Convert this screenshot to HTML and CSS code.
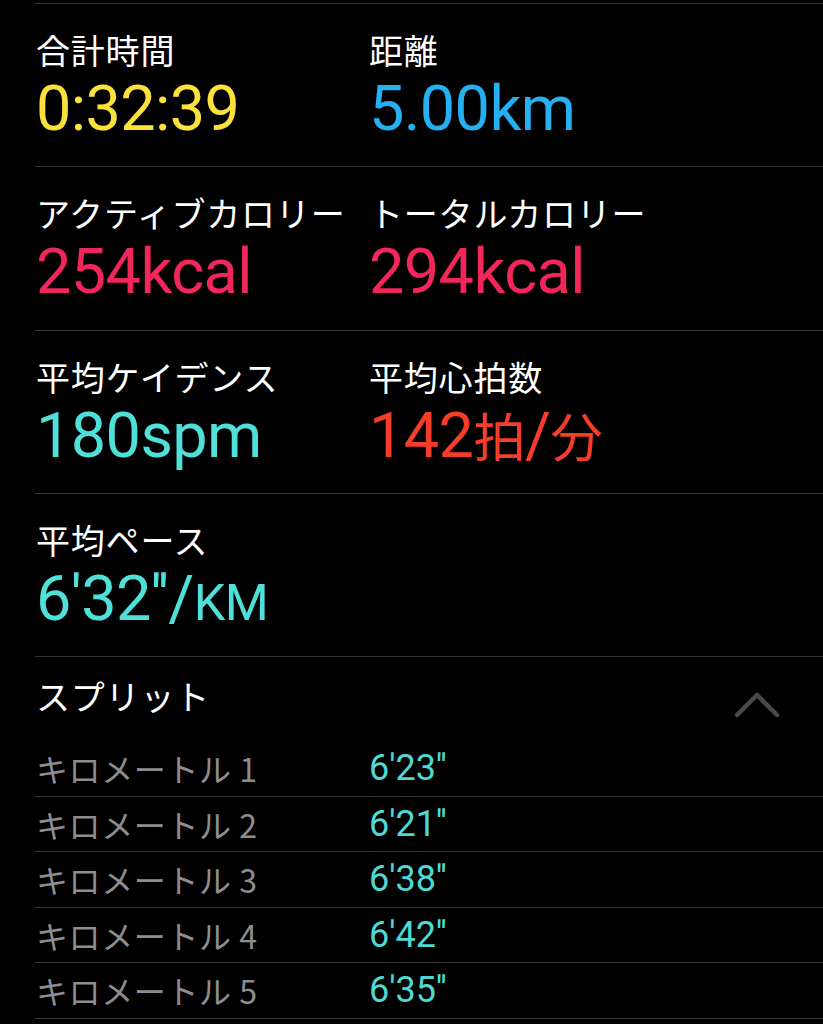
FILE: index.html
```html
<!DOCTYPE html>
<html lang="ja">
<head>
  <meta charset="UTF-8" />
  <title>ワークアウト</title>
  <link rel="stylesheet" href="styles.css">
</head>
<body>
  <div class="resumen">
    <div class="fila">
      <div class="dato">
        <div class="etiqueta">合計時間</div>
        <div class="valor amarillo">0:32:39</div>
      </div>
      <div class="dato">
        <div class="etiqueta">距離</div>
        <div class="valor azul">5.00km</div>
      </div>
    </div>

    <div class="fila">
      <div class="dato">
        <div class="etiqueta">アクティブカロリー</div>
        <div class="valor rosa">254kcal</div>
      </div>
      <div class="dato">
        <div class="etiqueta">トータルカロリー</div>
        <div class="valor rosa">294kcal</div>
      </div>
    </div>

    <div class="fila">
      <div class="dato">
        <div class="etiqueta">平均ケイデンス</div>
        <div class="valor turquesa">180spm</div>
      </div>
      <div class="dato">
        <div class="etiqueta">平均心拍数</div>
        <div class="valor rojo">142<span class="kanji">拍</span>/<span class="kanji">分</span></div>
      </div>
    </div>

    <div class="fila">
      <div class="dato">
        <div class="etiqueta">平均ペース</div>
        <div class="valor turquesa">6'32''/<span class="unidad">KM</span></div>
      </div>
    </div>

    <div class="splits-cabecera">
      <span class="etiqueta">スプリット</span>
      <svg class="chevron" width="46" height="28" viewBox="0 0 46 28">
        <path d="M3 24 L23 4 L43 24" fill="none" stroke="#4a4a4c" stroke-width="4.5" stroke-linecap="round" stroke-linejoin="round"/>
      </svg>
    </div>

    <div class="splits">
      <div class="split"><span class="km">キロメートル 1</span><span class="tiempo">6'23''</span></div>
      <div class="split"><span class="km">キロメートル 2</span><span class="tiempo">6'21''</span></div>
      <div class="split"><span class="km">キロメートル 3</span><span class="tiempo">6'38''</span></div>
      <div class="split"><span class="km">キロメートル 4</span><span class="tiempo">6'42''</span></div>
      <div class="split"><span class="km">キロメートル 5</span><span class="tiempo">6'35''</span></div>
    </div>
  </div>
</body>
</html>
```

FILE: styles.css
```css
body {
  margin: 0;
  background-color: #000;
  color: white;
  font-family: "Noto Sans CJK JP", sans-serif;
}

.resumen {
  padding-left: 35px;
  padding-top: 3px;
}

.fila {
  display: grid;
  grid-template-columns: 333px 1fr;
  border-top: 1px solid #343436;
  height: 163.25px;
  box-sizing: border-box;
  padding-top: 26px;
}

.dato {
  padding-left: 1px;
}

.etiqueta {
  font-size: 34px;
  line-height: 40px;
  letter-spacing: 0.8px;
  color: #fff;
  white-space: nowrap;
}

.valor {
  font-family: Roboto, "Noto Sans CJK JP", sans-serif;
  font-size: 63px;
  line-height: 72px;
  margin-top: 3px;
  letter-spacing: -0.6px;
  white-space: nowrap;
}

.kanji {
  font-size: 0.83em;
}

.unidad {
  font-size: 0.8em;
}

.amarillo { color: #fbe23a; }
.azul { color: #24b0f1; }
.rosa { color: #f1265b; }
.turquesa { color: #4fe0da; }
.rojo { color: #f63d2a; }

.splits-cabecera {
  display: flex;
  align-items: center;
  justify-content: space-between;
  border-top: 1px solid #343436;
  height: 85px;
  padding-left: 1px;
  padding-right: 43px;
  padding-bottom: 7px;
  box-sizing: border-box;
}

.chevron {
  margin-top: 18px;
}

.split {
  display: grid;
  grid-template-columns: 333px 1fr;
  align-items: center;
  height: 55.5px;
  box-sizing: border-box;
  border-bottom: 1px solid #343436;
  padding-left: 1px;
}

.km {
  font-size: 32px;
  letter-spacing: 0.6px;
  color: #8d8d91;
  white-space: nowrap;
}

.tiempo {
  font-family: Roboto, sans-serif;
  font-size: 36px;
  color: #4fd8d4;
}
```
